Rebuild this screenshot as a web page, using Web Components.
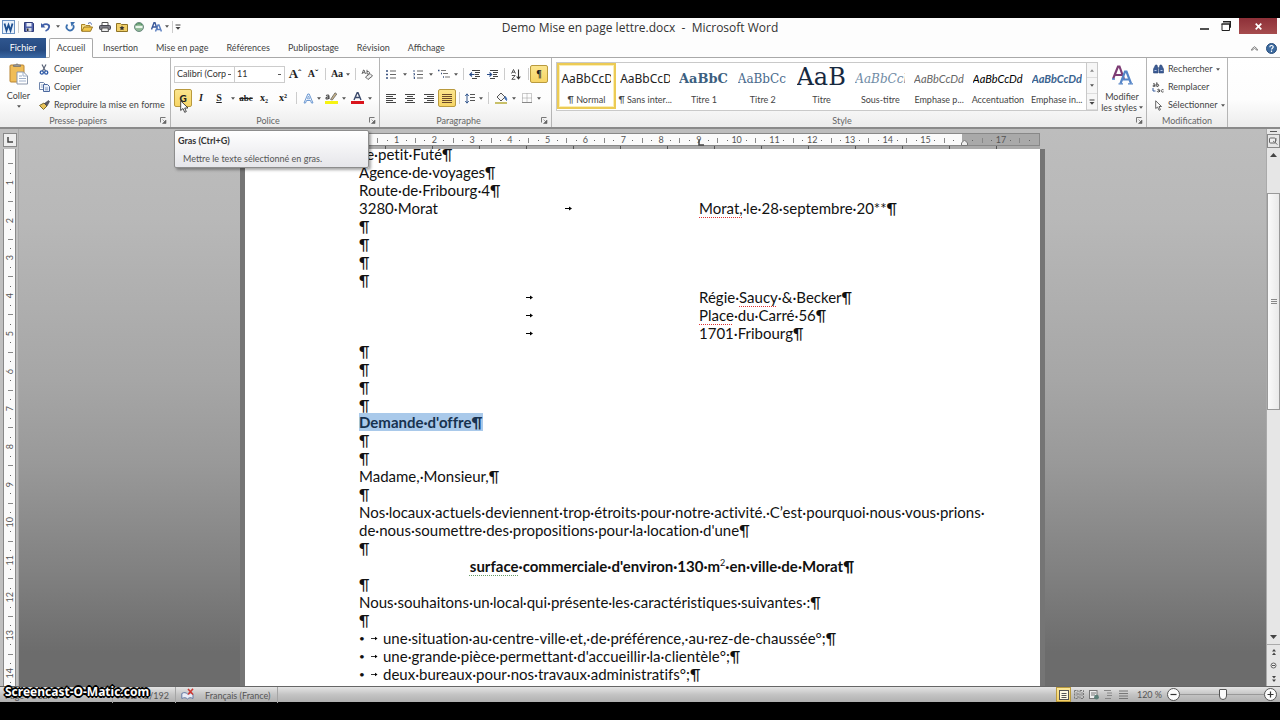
<!DOCTYPE html>
<html lang="fr">
<head>
<meta charset="utf-8">
<title>Demo Mise en page lettre.docx - Microsoft Word</title>
<style>
html, body { margin: 0; height: 100%; background: #000; }
body { font: 9px/12px Lato, "Noto Sans", sans-serif; color: #444; }
</style>
</head>
<body>
<word-window></word-window>

<script>
const ICONS = {
  word: [13, 14, '<rect x=".5" y=".5" width="12" height="13" fill="#e9f1fb" stroke="#6c93c4"/><path d="M2.5 3.5 4.5 10.5 6.5 5 8.5 10.5 10.5 3.5" fill="none" stroke="#1d4f91" stroke-width="1.8"/>'],
  save: [10, 10, '<path d="M.5.5h8l1 1v8h-9z" fill="#4d5fa8" stroke="#2e3a78"/><rect x="2.5" y="1" width="5" height="3.5" fill="#e8ecf8"/><rect x="2.5" y="6" width="5" height="3.5" fill="#cfd3dd"/><rect x="3" y="6.5" width="1.5" height="2.5" fill="#333"/>'],
  undo: [10, 10, '<path d="M1.500 3.500C5 1 9 2.500 8 5.500 7.500 7.500 6 8.500 4.500 9" fill="none" stroke="#3f5ea8" stroke-width="1.800"/><path d="M0 1v4.500h4.500z" fill="#3f5ea8"/>'],
  redo: [10, 10, '<path d="M2.500 2.500A3.500 3.500 0 1 0 8 3" fill="none" stroke="#3a6fae" stroke-width="1.800"/><path d="M5.500 0H10L6.500 4.500z" fill="#3a6fae"/>'],
  open: [12, 10, '<path d="M.5 9V2.500h3.500l1 1h4V5" fill="#f6dd86" stroke="#a98428"/><path d="M.8 9.300 3 5h8.500L9.500 9.300z" fill="#f3c84a" stroke="#9a7722"/><path d="M7 1.500c2-1.500 3.500-.5 3.500 1" fill="none" stroke="#3f5ea8"/>'],
  print: [12, 10, '<path d="M3 3.500V.5h6v3" fill="#fff" stroke="#555"/><rect x=".5" y="3.500" width="11" height="4" rx="1" fill="#7b7b85" stroke="#44444c"/><path d="M3 6h6l.5 3.500h-7z" fill="#eee" stroke="#555"/>'],
  folder: [12, 10, '<path d="M.5 9.500V1.500h4l1 1h6v7z" fill="#f1cf68" stroke="#8f7324"/><path d="M6 3.500l.8 1.600 1.700.2-1.200 1.200.3 1.700L6 7.400l-1.600.8.3-1.700-1.200-1.200 1.700-.2z" fill="#333"/>'],
  sync: [10, 10, '<circle cx="5" cy="5" r="4.500" fill="#8fb896" stroke="#6c8a80"/><path d="M1.500 5h7" stroke="#e9f5ea" stroke-width="2.200"/><path d="M2 3a4 4 0 0 1 6 0" fill="none" stroke="#4c8f5b"/>'],
  letters: [11, 10, '<path d="M.5 7.500 3 .8h1l2.300 6.700M1.500 5h4" fill="none" stroke="#3a5899" stroke-width="1.400"/><path d="M4.500 9.500 7 3h1l2.400 6.500M5.500 7.500h4" fill="none" stroke="#5b7fc0" stroke-width="1.400"/>'],
  more: [6, 6, '<path d="M.5 1h5" stroke="#444"/><path d="M.5 3h5L3 5.700z" fill="#444"/>'],
  paste: [20, 22, '<rect x="1" y="2" width="14" height="17" rx="1" fill="#f0bd58" stroke="#b98430"/><path d="M4.500 3.500V2h2a1.600 1.600 0 0 1 3 0h2v1.500z" fill="#9a9a9a" stroke="#6d6d6d" stroke-width=".7"/><path d="M8 9h6.500l4 4v8H8z" fill="#fff" stroke="#8b97ab"/><path d="M14 9v4h4M10 13h3M10 15.500h7M10 18h7" fill="none" stroke="#9fb0cb"/>'],
  cut: [10, 11, '<path d="M3 .5 6.500 7M7 .5 3.500 7" stroke="#5a6478" stroke-width="1.200"/><circle cx="2.800" cy="8.500" r="1.600" fill="none" stroke="#2c58a6" stroke-width="1.300"/><circle cx="7.200" cy="8.500" r="1.600" fill="none" stroke="#2c58a6" stroke-width="1.300"/>'],
  copy: [11, 10, '<path d="M.5.5h4l2 2v5h-6z" fill="#fff" stroke="#7086ad"/><path d="M4.500 2.500h4l2 2v5h-6z" fill="#e8effa" stroke="#4b689e"/><path d="M6 6h3M6 7.800h3M1.800 3h2M1.800 5h2" stroke="#6d88b8" stroke-width=".8"/>'],
  brush: [11, 10, '<path d="M.5 5.500 5 3l3 3-3.500 3.500z" fill="#e8c35a" stroke="#7d6a2e"/><path d="M5.500 3.500 9.500.5l1 1L8 6z" fill="#5a5a66" stroke="#3c3c46" stroke-width=".6"/>'],
  eraser: [12, 11, '<path d="M1 5 2.500 1h.5L4.500 5M1.700 3.700h2M6 .8V5h1.500a1.300 1.300 0 0 0 0-2.500H6" fill="none" stroke="#555" stroke-width=".9"/><path d="M4.500 8 9 4.500 11.500 7 7 10.500z" fill="#eee" stroke="#555" stroke-width=".9"/>'],
  effect: [11, 11, '<path d="M1 10 4.800 1h1.400L10 10H8.500L7.500 7.500H3.500L2.500 10z" fill="#f3f8ff" stroke="#6f9ad2"/><path d="M4.300 5.800h2.400L5.500 3z" fill="#fff" stroke="#6f9ad2" stroke-width=".8"/>'],
  marker: [13, 12, '<rect y="9" width="13" height="3" fill="#f6f312"/><path d="M1 3.500c2-1 3-.5 3 1V7M4 5C2 4.500.8 5.500 1 6.500 1.500 7.500 3 7 4 6" fill="none" stroke="#444" stroke-width="1.100"/><path d="M5.500 7.500 10 .8l1.800 1.200-4.500 6z" fill="#c9b58a" stroke="#555" stroke-width=".7"/>'],
  color: [13, 12, '<rect y="9" width="13" height="3" fill="#d9141c"/><path d="M3 8 6.200.8h.8L10 8M4 5.500h5" fill="none" stroke="#3b4a6b" stroke-width="1.400"/>'],
  bullets: [10, 9, '<path d="M4 1h6M4 4.500h6M4 8h6" stroke="#666"/><path d="M0 1h2M0 4.500h2M0 8h2" stroke="#39517f" stroke-width="1.500"/>'],
  numbers: [10, 9, '<path d="M4 1h6M4 4.500h6M4 8h6" stroke="#666"/><path d="M1 0v2M.5 3.500h1v1.500h-1M.5 7h1v2h-1" fill="none" stroke="#39517f" stroke-width=".9"/>'],
  levels: [12, 10, '<path d="M3 1.500h5M5 4.500h5M7 8h5" stroke="#777"/><path d="M0 1.500h1.500M3 4.500h1M5 8h1" stroke="#39517f" stroke-width="1.500"/>'],
  outdent: [11, 9, '<path d="M3 .5h8M6 2.500h5M6 4.500h4M6 6.500h5M3 8.500h5" stroke="#444"/><path d="M5.500 4.500H1M3 2.500l-2.200 2L3 6.500" fill="none" stroke="#2a4d8a" stroke-width="1.100"/>'],
  indent: [11, 9, '<path d="M3 .5h8M6 2.500h5M6 4.500h4M6 6.500h5M3 8.500h5" stroke="#444"/><path d="M0 4.500h4.500M2.500 2.500l2.200 2-2.200 2" fill="none" stroke="#2a4d8a" stroke-width="1.100"/>'],
  sort: [10, 11, '<path d="M.5 4.500 2.500.5l2 4M1.200 3.200h2.600M.8 6.500h3.400L.8 10.300h3.600" fill="none" stroke="#444" stroke-width=".9"/><path d="M7.500.5v9M5.700 7.500l1.800 2.300 1.800-2.300" fill="none" stroke="#333" stroke-width="1.100"/>'],
  left: [10, 9, '<path d="M0 .5h10M0 2.500h7M0 4.500h10M0 6.500h7M0 8.500h10" stroke="#444"/>'],
  center: [10, 9, '<path d="M0 .5h10M2 2.500h6M0 4.500h10M2 6.500h6M0 8.500h10" stroke="#444"/>'],
  right: [10, 9, '<path d="M0 .5h10M3 2.500h7M0 4.500h10M3 6.500h7M0 8.500h10" stroke="#444"/>'],
  justify: [10, 9, '<path d="M0 .5h10M0 2.500h10M0 4.500h10M0 6.500h10M0 8.500h10" stroke="#6b4a2a"/>'],
  spacing: [10, 11, '<path d="M5 1.500h5M5 4.500h5M5 7.500h5" stroke="#555"/><path d="M2 1v9M.3 3 2 .8 3.700 3M.3 8 2 10.200 3.700 8" fill="none" stroke="#35598f"/>'],
  shading: [13, 12, '<rect y="10" width="12" height="2" fill="#c8c06a"/><path d="M2 5 6 1l4 4-4 4z" fill="#f5f5f5" stroke="#555"/><path d="M10 4.500c1.500 1 2 2.500 1.500 4l-1.500-2z" fill="#3f6db0" stroke="#3f6db0"/>'],
  borders: [10, 10, '<path d="M.5.5h9v9h-9zM5 .5v9M.5 5h9" fill="none" stroke="#999" stroke-dasharray="1 1"/><path d="M0 9.500h10" stroke="#888"/>'],
  styles: [21, 20, '<path d="M1 14 6 1.500h1.500L12 14M3 10h8" fill="none" stroke="#7d3c74" stroke-width="2.200"/><path d="M8.500 18.500 13 6.500h1.500L19 18.500M10 14.500h7" fill="none" stroke="#5585c8" stroke-width="2.200"/><path d="M6.500 18.800h4.500M16 18.800h5M0 14h3" stroke="#5585c8" stroke-width="1.300"/>'],
  find: [11, 10, '<path d="M.5 9V5L2.500 1H4l1 4v4zM6 9V5l1-4h1.500l2 4v4z" fill="#3c5c96" stroke="#2b4675" stroke-width=".6"/><path d="M4.500 4h2" stroke="#2b4675"/><path d="M1.500 6.500h2M7.500 6.500h2" stroke="#b9cbe8"/>'],
  replace: [12, 11, '<path d="M1 2c1.500-.6 2-.2 2 1v1.500M3 3.300C1.500 3 .8 3.600 1 4.200s1.300.4 2-.3M4.800.3v4.200h1a1.200 1.200 0 0 0 0-2.300h-1M5.500 7.500c1.500-.6 2-.2 2 1V10M7.500 8.800c-1.500-.3-2.200.3-2 .9s1.300.4 2-.3M11.500 7.800c-1.500-.6-2.300.2-2.300 1s.8 1.700 2.300 1" fill="none" stroke="#444"/><path d="M1 6v3h2.500" fill="none" stroke="#345a9c"/>'],
  select: [7, 11, '<path d="M.7.8v7.700L2.600 7l1.500 3.300 1.300-.6L4 6.500h2.500z" fill="#fff" stroke="#555" stroke-width=".9"/>'],
  launch: [7, 7, '<path d="M.5 5.500v-5h5" fill="none" stroke="#777"/><path d="M2.500 2.500 5.500 5.500M6 3v3.500H2.500z" fill="#666" stroke="#666" stroke-width=".6"/>'],
  down: [4, 3, '<path d="M0 .3h4L2 2.800z" fill="#555"/>'],
  up: [4, 3, '<path d="M0 2.800h4L2 .3z" fill="#888"/>'],
  minimize: [9, 8, '<path d="M0 7h9" stroke="#222" stroke-width="1.600"/>'],
  restore: [10, 10, '<path d="M1 3v6.500h7.500V3" fill="#fff" stroke="#222"/><path d="M.5 3H9M2 .8h7.500v6" fill="none" stroke="#222" stroke-width="1.600"/>'],
  close: [7, 7, '<path d="M.7.7l5.600 5.600M6.300.7.700 6.300" stroke="#fff" stroke-width="1.700"/>'],
  collapse: [7, 5, '<path d="M.7 3 3.500.6 6.300 3v1.400L3.500 2.400.7 4.400z" fill="none" stroke="#666" stroke-width=".8"/>'],
  help: [11, 11, '<circle cx="5.500" cy="5.500" r="5" fill="#3c6a9f" stroke="#294e7c"/><path d="M3.800 4.200c0-2.200 3.400-2.200 3.400-.2 0 1.200-1.700 1.200-1.700 2.600M5.500 7.600v1.300" fill="none" stroke="#fff" stroke-width="1.200"/>'],
  proof: [14, 13, '<path d="M.8 5.500C3 4 5 4.500 6.500 6 8 4.500 10 4.500 12 6v4.500c-2-1.200-4-1-5.500.5C5 9.500 3 9.300.8 10.500z" fill="#e9edf6" stroke="#6478a3"/><path d="M7 1l5 5.500M12 .8 7.200 6.500" stroke="#cf3a34" stroke-width="1.600"/>'],
  viewPrint: [10, 10, '<rect x=".5" y=".5" width="9" height="9" fill="#fffbe6" stroke="#555"/><path d="M2.500 3.500h5M2.500 5.500h5M2.500 7.500h5" stroke="#555"/>'],
  viewRead: [10, 9, '<path d="M.5.5h3.500v8H.5zM6 .5h3.500v8H6z" fill="none" stroke="#777" stroke-dasharray="2 1"/><path d="M1.500 3h2M1.500 5h2M7 3h2M7 5h2" stroke="#888"/>'],
  viewWeb: [10, 10, '<rect x=".5" y=".5" width="7.500" height="8" fill="#eee" stroke="#777"/><path d="M2 3h5M2 5h4" stroke="#777"/><circle cx="7.500" cy="7.200" r="2.400" fill="#5c7f78"/>'],
  viewPlan: [9, 9, '<path d="M0 .5h7M3 3h5M3 5.500h5M1 8.500h6" stroke="#888"/>'],
  viewDraft: [9, 9, '<path d="M0 1h9M0 3.500h9M0 6h9M0 8.500h9" stroke="#777"/>'],
  viewRuler: [9, 8, '<rect x=".5" y="1" width="6" height="5" rx="1" fill="#eee" stroke="#666"/><path d="M4 4l4.500 3.500M7 1v3" stroke="#777"/>'],
  arrowUp: [7, 4, '<path d="M0 4h7L3.500 0z" fill="#444"/>'],
  arrowDown: [7, 4, '<path d="M0 0h7L3.500 4z" fill="#444"/>'],
  twoUp: [4, 6, '<path d="M0 2.500h4L2 0zM0 6h4L2 3.500z" fill="#444"/>'],
  twoDown: [4, 6, '<path d="M0 0h4L2 2.500zM0 3.500h4L2 6z" fill="#444"/>'],
  target: [7, 7, '<circle cx="3.500" cy="3.500" r="2.500" fill="#eee" stroke="#666"/><path d="M2 3.500h3" stroke="#555"/>'],
  minus: [13, 13, '<circle cx="6.500" cy="6.500" r="6" fill="#fcfcfc" stroke="#555"/><path d="M3.500 6.500h6" stroke="#333" stroke-width="1.200"/>'],
  plus: [13, 13, '<circle cx="6.500" cy="6.500" r="6" fill="#fcfcfc" stroke="#555"/><path d="M3.500 6.500h6M6.500 3.500v6" stroke="#333" stroke-width="1.200"/>'],
  pointer: [9, 13, '<path d="M.7.8v9.700L3 8.500l1.700 3.800 1.600-.7L4.700 8H8z" fill="#fff" stroke="#333" stroke-width=".9"/>'],
  tab: [7, 5, '<path d="M0 2.500h5" stroke="#000"/><path d="M4 .5 7 2.500l-3 2z" fill="#000"/>'],
  tabSmall: [7, 5, '<path d="M0 2.500h5" stroke="#000" stroke-width=".8"/><path d="M4 .8 6.500 2.500 4 4.200z" fill="#000"/>'],
  corner: [6, 6, '<path d="M1 0v5h5" fill="none" stroke="#444" stroke-width="1.500"/>'],
  indentMark: [7, 7, '<path d="M.5 6.500V4l3-3 3 3v2.500z" fill="#eee" stroke="#777"/>']
};
const icon = name => {
  const [w, h, body] = ICONS[name];
  return `<svg width="${w}" height="${h}" viewBox="0 0 ${w} ${h}" aria-hidden="true">${body}</svg>`;
};
const BASE = `
  :host, *, *::before { box-sizing: border-box; }
  button { font: inherit; color: inherit; background: none; border: 0; padding: 0; margin: 0;
    display: flex; align-items: center; justify-content: center; flex: none; white-space: nowrap; }
  svg { display: block; flex: none; }
`;
const define = (name, css, html) => customElements.define(name, class extends HTMLElement {
  constructor() {
    super();
    this.attachShadow({ mode: 'open' });
  }
  connectedCallback() {
    const template = document.createElement('template');
    template.innerHTML = `<style>${BASE}${css}</style>${typeof html === 'function' ? html(this) : html}`;
    this.shadowRoot.replaceChildren(template.content.cloneNode(true));
  }
});

/* Small square command; "size" picks its width, "on" lights it. */
define('tool-button', `
  :host { display: block; flex: none; width: 18px; height: 18px; }
  :host([size="xs"]) { width: 6px; }
  :host([size="s"]) { width: 8px; }
  :host([size="m"]) { width: 10px; }
  :host([size="l"]) { width: 16px; }
  :host([size="xl"]) { width: 20px; }
  button { width: 100%; height: 100%; font: 700 10px/12px "Liberation Serif", serif; color: #222; }
  :host([on]) button { background: linear-gradient(#fbe58e, #f7d565); border: 1px solid #b99a3e; border-radius: 2px; }
`, el => `<button type="button" aria-label="${el.getAttribute('label')}">${el.hasAttribute('icon') ? icon(el.getAttribute('icon')) : '<slot></slot>'}</button>`);

define('tool-gap', `
  :host { display: flex; flex: none; width: 8px; height: 12px; justify-content: center; }
  :host([size="xs"]) { width: 4px; }
  :host([size="s"]) { width: 6px; }
  i { width: 1px; background: #ccc; }
`, '<i></i>');

/* Ribbon section: commands above, caption and launcher below. */
define('ribbon-group', `
  :host { display: flex; flex-direction: column; flex: none; border-right: 1px solid #b5b5b5; }
  .body { flex: 1; display: flex; min-width: 0; }
  footer { display: flex; align-items: center; height: 13px; color: #666; }
  footer span { flex: 1; text-align: center; }
  footer button { width: 14px; height: 13px; }
`, el => `<div class="body"><slot></slot></div><footer><span>${el.getAttribute('caption')}</span>${el.hasAttribute('plain') ? '' : `<button type="button" aria-label="Options ${el.getAttribute('caption')}">${icon('launch')}</button>`}</footer>`);

/* Icon with a text beside it and, when asked, a drop arrow. */
define('text-command', `
  :host { display: block; }
  button { height: 18px; gap: 3px; justify-content: flex-start; }
  .pic { width: 14px; display: flex; justify-content: center; }
`, el => `<button type="button"><span class="pic">${icon(el.getAttribute('icon'))}</span><slot></slot>${el.hasAttribute('drop') ? icon('down') : ''}</button>`);

define('style-card', `
  :host { display: block; flex: 1; min-width: 0; }
  button { width: 100%; height: 46px; flex-direction: column; justify-content: flex-start; padding: 0 3px; border: 2px solid transparent; }
  :host([on]) button { border-color: #eccb55; box-shadow: inset 0 0 0 1px #fbeeb5; }
  .sample { width: 50px; height: 28px; line-height: 28px; overflow: hidden; text-align: left; }
  .name { line-height: 14px; }
`, '<button type="button"><span class="sample"><slot name="sample"></slot></span><span class="name"><slot></slot></span></button>');

define('title-bar', `
  :host { display: grid; grid-template-columns: 1fr auto 1fr; height: 20px; background: #fdfdfd; }
  .quick { display: flex; align-items: center; height: 17px; }
  h1 { margin: 0; font: 400 12px/20px "Open Sans", "Noto Sans", sans-serif; color: #333; white-space: pre; }
  .window { display: flex; justify-content: flex-end; padding-right: 3px; }
  .window button { width: 22px; height: 16px; }
  .window .close { width: 38px; margin-left: 2px; background: linear-gradient(#8e3038, #a64c4e); }
`, `<div class="quick">
  <tool-button size="l" icon="word" label="Word"></tool-button><tool-gap size="xs"></tool-gap>
  <tool-button icon="save" label="Enregistrer"></tool-button><tool-button size="l" icon="undo" label="Annuler"></tool-button>
  <tool-button size="s" icon="down" label="Liste Annuler"></tool-button><tool-button size="l" icon="redo" label="Rétablir"></tool-button>
  <tool-button icon="open" label="Ouvrir"></tool-button><tool-button icon="print" label="Imprimer"></tool-button>
  <tool-button size="l" icon="folder" label="Favoris"></tool-button><tool-button icon="sync" label="Synchroniser"></tool-button>
  <tool-button size="l" icon="letters" label="Styles"></tool-button><tool-button size="xs" icon="down" label="Liste Styles"></tool-button>
  <tool-gap size="xs"></tool-gap><tool-button size="s" icon="more" label="Personnaliser"></tool-button>
</div>
<h1>Demo Mise en page lettre.docx  -  Microsoft Word</h1>
<div class="window"><button type="button" aria-label="Réduire">${icon('minimize')}</button><button type="button" aria-label="Restaurer">${icon('restore')}</button><button type="button" class="close" aria-label="Fermer">${icon('close')}</button></div>`);

define('ribbon-tabs', `
  :host { display: flex; height: 20px; background: #fdfdfd; border-bottom: 1px solid #a9a9a9; }
  button { height: 20px; padding: 0 9px; }
  .file { width: 46px; background: linear-gradient(#2f568f, #264a80 60%, #3a68a4); color: #fff; margin-right: 3px; }
  .on { width: 44px; background: #fff; border: 1px solid #a9a9a9; border-bottom-color: #fff; border-radius: 2px 2px 0 0; margin-right: 1px; }
  .tools { margin-left: auto; display: flex; }
  .tools button { padding: 0; width: 17px; }
`, `<button type="button" class="file">Fichier</button><button type="button" class="on">Accueil</button>
${['Insertion', 'Mise en page', 'Références', 'Publipostage', 'Révision', 'Affichage'].map(t => `<button type="button">${t}</button>`).join('')}
<div class="tools"><button type="button" aria-label="Réduire le ruban">${icon('collapse')}</button><button type="button" aria-label="Aide">${icon('help')}</button></div>`);

define('home-ribbon', `
  :host { display: flex; height: 71px; background: linear-gradient(#fff, #fdfdfd 60%, #ececec); border-bottom: 2px solid #8a8a8a; padding-right: 52px; }
  .clip { width: 171px; }
  .font { width: 209px; }
  .para { width: 172px; }
  .style { flex: 1; min-width: 0; }
  .edit { width: 81px; }
  .paste { width: 37px; flex-direction: column; justify-content: flex-start; padding-top: 5px; }
  .paste span { line-height: 14px; padding-top: 4px; }
  .paste svg:last-child { margin-top: 2px; }
  .stack { padding-top: 2px; }
  .edit .stack { padding-left: 4px; }
  .rows { display: grid; align-content: start; gap: 6px; padding: 7px 0 0 3px; }
  .para .rows { padding-left: 2px; }
  .rows > div { display: flex; align-items: center; height: 18px; }
  select { appearance: none; font: inherit; line-height: 14px; color: #333; height: 17px; padding: 0 8px 0 2px; margin: 0; border: 1px solid #ccc; border-radius: 0;
    background: #fff linear-gradient(#555, #555) no-repeat right 3px center / 3px 1px; }
  .face { width: 61px; }
  .size { width: 51px; margin-left: -1px; }
  .gallery { flex: 1; min-width: 0; display: flex; align-items: flex-start; height: 49px; margin: 4px 0 0 4px; border: 1px solid #c9c9c9; background: #fff; }
  .scroll { display: grid; grid-template-rows: 15px 16px 16px; width: 11px; border-left: 1px solid #c9c9c9; }
  .scroll button { border-bottom: 1px solid #ddd; background: #f6f6f6; }
  .change { width: 48px; flex-direction: column; justify-content: flex-start; padding-top: 7px; line-height: 11px; }
  .change .l { padding-top: 6px; }
  .change .m { display: flex; align-items: center; gap: 2px; }
  [slot] { white-space: nowrap; }
  .b { font: 12px/28px "Noto Sans", sans-serif; color: #222; }
  .t1 { font: 700 13px/28px "DejaVu Serif", serif; color: #3c5f80; }
  .t2 { font: 12px/28px "DejaVu Serif", serif; color: #48698c; }
  .t { font: 24px/24px "DejaVu Serif", serif; color: #17293f; }
  .st { font: italic 12px/28px "DejaVu Serif", serif; color: #6f8ba5; }
  .e { font: italic 11px/28px Lato, sans-serif; color: #666; }
  .a { font: italic 11px/28px Lato, sans-serif; color: #000; }
  .i { font: italic 700 11px/28px Lato, sans-serif; color: #3a6390; }
  .k { font-family: Lato, sans-serif; font-weight: 900; }
`, `<ribbon-group class="clip" caption="Presse-papiers">
  <button type="button" class="paste">${icon('paste')}<span>Coller</span>${icon('down')}</button>
  <div class="stack"><text-command icon="cut">Couper</text-command><text-command icon="copy">Copier</text-command><text-command icon="brush">Reproduire la mise en forme</text-command></div>
</ribbon-group>
<ribbon-group class="font" caption="Police"><div class="rows">
  <div><select class="face" aria-label="Police"><option>Calibri (Corp</option></select><select class="size" aria-label="Taille"><option>11</option></select>
    <tool-button size="xl" label="Agrandir"><span style="font-size:13px">A</span>ˆ</tool-button><tool-button size="l" label="Réduire">Aˇ</tool-button><tool-gap></tool-gap>
    <tool-button size="l" label="Casse">Aa</tool-button><tool-button size="xs" icon="down" label="Liste Casse"></tool-button><tool-gap></tool-gap><tool-button size="l" icon="eraser" label="Effacer"></tool-button></div>
  <div><tool-button on label="Gras"><span class="k">G</span></tool-button><tool-button label="Italique"><i>I</i></tool-button><tool-button label="Souligné"><u>S</u></tool-button><tool-button size="m" icon="down" label="Liste Souligné"></tool-button>
    <tool-button size="l" label="Barré"><s style="font-size:9px">abc</s></tool-button><tool-button size="xl" label="Indice">x₂</tool-button><tool-button label="Exposant">x²</tool-button><tool-gap></tool-gap>
    <tool-button size="l" icon="effect" label="Effets"></tool-button><tool-button size="xs" icon="down" label="Liste Effets"></tool-button><tool-button icon="marker" label="Surlignage"></tool-button><tool-button size="s" icon="down" label="Liste Surlignage"></tool-button>
    <tool-button icon="color" label="Couleur"></tool-button><tool-button size="s" icon="down" label="Liste Couleur"></tool-button></div>
</div></ribbon-group>
<ribbon-group class="para" caption="Paragraphe"><div class="rows">
  <div><tool-button icon="bullets" label="Puces"></tool-button><tool-button size="m" icon="down" label="Liste Puces"></tool-button><tool-button size="l" icon="numbers" label="Numéros"></tool-button><tool-button size="m" icon="down" label="Liste Numéros"></tool-button>
    <tool-button size="l" icon="levels" label="Niveaux"></tool-button><tool-button size="s" icon="down" label="Liste Niveaux"></tool-button><tool-gap size="s"></tool-gap><tool-button size="l" icon="outdent" label="Diminuer le retrait"></tool-button><tool-button size="xl" icon="indent" label="Augmenter le retrait"></tool-button><tool-gap size="xs"></tool-gap>
    <tool-button size="xl" icon="sort" label="Trier"></tool-button><tool-gap size="xs"></tool-gap><tool-button on label="Afficher tout">¶</tool-button></div>
  <div><tool-button icon="left" label="Gauche"></tool-button><tool-button size="xl" icon="center" label="Centrer"></tool-button><tool-button icon="right" label="Droite"></tool-button><tool-button on icon="justify" label="Justifier"></tool-button><tool-gap size="s"></tool-gap>
    <tool-button size="l" icon="spacing" label="Interligne"></tool-button><tool-button size="xs" icon="down" label="Liste Interligne"></tool-button><tool-gap></tool-gap><tool-button icon="shading" label="Trame"></tool-button><tool-button size="s" icon="down" label="Liste Trame"></tool-button>
    <tool-button icon="borders" label="Bordures"></tool-button><tool-button size="xs" icon="down" label="Liste Bordures"></tool-button></div>
</div></ribbon-group>
<ribbon-group class="style" caption="Style">
  <div class="gallery">${[['b', 'AaBbCcD', '¶ Normal'], ['b', 'AaBbCcD', '¶ Sans inter...'], ['t1', 'AaBbC', 'Titre 1'], ['t2', 'AaBbCc', 'Titre 2'], ['t', 'AaB', 'Titre'], ['st', 'AaBbCcl', 'Sous-titre'], ['e', 'AaBbCcDd', 'Emphase p...'], ['a', 'AaBbCcDd', 'Accentuation'], ['i', 'AaBbCcDd', 'Emphase in...']]
    .map(([c, s, n], k) => `<style-card${k ? '' : ' on'}><span slot="sample" class="${c}">${s}</span>${n}</style-card>`).join('')}
    <div class="scroll"><button type="button" aria-label="Styles précédents">${icon('up')}</button><button type="button" aria-label="Styles suivants">${icon('down')}</button><button type="button" aria-label="Tous les styles">${icon('more')}</button></div></div>
  <button type="button" class="change">${icon('styles')}<span class="l">Modifier</span><span class="m">les styles ${icon('down')}</span></button>
</ribbon-group>
<ribbon-group class="edit" caption="Modification" plain><div class="stack"><text-command icon="find" drop>Rechercher</text-command><text-command icon="replace">Remplacer</text-command><text-command icon="select" drop>Sélectionner</text-command></div></ribbon-group>`);

/* Centimetre ruler, horizontal or vertical. */
define('ruler-scale', `
  :host { display: flex; overflow: hidden; color: #555; }
  .cell { display: grid; align-items: center; justify-items: center; }
  :host(:not([vertical])) .run { display: grid; grid-template-columns: repeat(18, minmax(0, 1fr)); flex: none; width: 680px; }
  :host(:not([vertical])) .cell { grid-template-columns: repeat(4, minmax(0, 1fr)); }
  :host(:not([vertical])) i { width: 1px; height: 5px; background: #888; }
  :host([vertical]) .run { display: grid; grid-template-rows: repeat(15, minmax(0, 1fr)); height: 566px; flex: none; width: 100%; }
  :host([vertical]) .cell { grid-template-rows: repeat(4, minmax(0, 1fr)); }
  :host([vertical]) i { width: 5px; height: 1px; background: #888; }
  :host([vertical]) span { writing-mode: vertical-rl; transform: rotate(180deg); }
  span { display: grid; place-items: center; }
  b { width: 1px; height: 1px; background: #666; }
`, el => {
  const vertical = el.hasAttribute('vertical');
  const shown = k => vertical ? k < 15 : k < 18 && k !== 16;
  return `<div class="run">${Array.from({ length: vertical ? 15 : 18 }, (_, k) => `<div class="cell"><i></i><b></b><span>${shown(k + 1) ? k + 1 : ''}</span><b></b></div>`).join('')}</div>`;
});

define('letter-line', `
  :host { display: flex; height: 18px; align-items: center; white-space: nowrap; }
  :host([centered]) { justify-content: center; }
  .lead { flex: none; width: 340px; display: flex; align-items: center; }
  .lead svg { margin: 0 auto; }
  .item { flex: none; width: 24px; display: flex; align-items: center; gap: 6px; font-size: 10px; }
`, el => el.hasAttribute('tabbed') ? `<span class="lead"><slot name="before"></slot>${icon('tab')}</span><span><slot></slot></span>`
  : el.hasAttribute('bullet') ? `<span class="item">•${icon('tabSmall')}</span><span><slot></slot></span>` : '<span><slot></slot></span>');

define('letter-page', `
  :host { display: block; width: 795px; margin: 0 auto; background: #fff; box-shadow: -5px 0 0 #757575, 5px 0 0 #757575; overflow: hidden; color: #111;
    font: 15px/18px Lato, "Noto Sans", sans-serif; font-variant-ligatures: none; }
  article { width: 606px; margin: -4px 0 0 114px; }
  .gap { height: 71px; }
  u { text-decoration: underline dotted #d33 1px; text-underline-offset: 3px; text-decoration-skip-ink: none; }
  .g { text-decoration-color: #696; }
  mark { display: inline-block; height: 18px; background: #a9c9ea; color: #17324f; font-weight: 700; }
  strong sup { font-size: 9px; line-height: 0; font-weight: 400; }
`, () => {
  const blank = '<letter-line>¶</letter-line>';
  const gap = `<div class="gap">${blank.repeat(4)}</div>`;
  return `<article>
  <letter-line>Le·petit·Futé¶</letter-line><letter-line>Agence·de·voyages¶</letter-line><letter-line>Route·de·Fribourg·4¶</letter-line>
  <letter-line tabbed><span slot="before">3280·Morat</span><u>Morat,</u>·le·28·septembre·20**¶</letter-line>
  ${gap}
  <letter-line tabbed>Régie·<u>Saucy</u>·&amp;·Becker¶</letter-line><letter-line tabbed><u>Place</u>·du·Carré·56¶</letter-line><letter-line tabbed>1701·Fribourg¶</letter-line>
  ${gap}
  <letter-line><mark>Demande·d'offre¶</mark></letter-line>${blank}${blank}
  <letter-line>Madame,·Monsieur,¶</letter-line>${blank}
  <letter-line>Nos·locaux·actuels·deviennent·trop·étroits·pour·notre·activité.·C’est·pourquoi·nous·vous·prions·</letter-line>
  <letter-line>de·nous·soumettre·des·propositions·pour·la·location·d'une¶</letter-line>${blank}
  <letter-line centered><strong><u class="g">surface</u>·commerciale·d'environ·130·m<sup>2</sup>·en·ville·de·Morat¶</strong></letter-line>${blank}
  <letter-line>Nous·souhaitons·un·local·qui·présente·les·caractéristiques·suivantes·:¶</letter-line>${blank}
  <letter-line bullet>une·situation·au·centre-ville·et,·de·préférence,·au·rez-de-chaussée°;¶</letter-line>
  <letter-line bullet>une·grande·pièce·permettant·d'accueillir·la·clientèle°;¶</letter-line>
  <letter-line bullet>deux·bureaux·pour·nos·travaux·administratifs°;¶</letter-line>
</article>`;
});

define('scroll-rail', `
  :host { display: flex; flex-direction: column; align-items: center; width: 14px; background: #e6e6e6; border-left: 1px solid #aaa; padding-top: 2px; }
  button { width: 13px; height: 14px; }
  .split { height: 3px; border-top: 1px solid #555; width: 7px; }
  .rule { border: 1px solid #888; }
  .track { flex: 1; width: 100%; padding-top: 31px; }
  .thumb { height: 217px; display: grid; place-content: center; gap: 1px; border: 1px solid #999; background: linear-gradient(90deg, #fafafa, #e9e9e9); }
  .thumb i { width: 6px; height: 1px; background: #888; }
  .foot { border-top: 1px solid #aaa; }
`, `<div class="split"></div><button type="button" class="rule" aria-label="Règle">${icon('viewRuler')}</button><button type="button" aria-label="Haut">${icon('arrowUp')}</button>
<div class="track"><div class="thumb"><i></i><i></i><i></i></div></div>
<button type="button" aria-label="Bas">${icon('arrowDown')}</button><button type="button" class="foot" aria-label="Page précédente">${icon('twoUp')}</button><button type="button" aria-label="Objet">${icon('target')}</button><button type="button" aria-label="Page suivante">${icon('twoDown')}</button>`);

define('work-area', `
  :host { display: flex; min-height: 0; overflow: hidden; background: linear-gradient(#bdbdbd, #b8b8b8 16%, #a6a6a6 45%, #999 60%, #808080 80%, #6c6c6c 94%); }
  .side { display: flex; flex-direction: column; width: 19px; background: #bfbfbf; padding-left: 3px; border-right: 1px solid #aaa; }
  .side button { width: 14px; height: 14px; margin: 4px 0 2px; background: #eee; border: 1px solid #888; }
  .side ruler-scale { flex: 1; flex-direction: column; width: 13px; background: #fafafa; border: solid #888; border-width: 0 1px; padding-top: 10px; }
  .main { flex: 1; min-width: 0; display: flex; flex-direction: column; }
  .ruler { position: relative; width: 795px; margin: 4px auto 0; }
  .across { height: 13px; background: linear-gradient(90deg, #b5b5b5 114px, #fafafa 114px 717px, #a9a9a9 717px); border: 1px solid #888; border-left: 0; padding-left: 128px; }
  .stops { height: 3px; background: repeating-linear-gradient(90deg, transparent 0 46px, #555 46px 47px), #ababab; }
  .stop, .margin { position: absolute; bottom: 3px; }
  .stop { left: 453px; }
  .margin { left: 716px; }
  letter-page { flex: 1; min-height: 0; }
`, `<div class="side"><button type="button" aria-label="Tabulation">${icon('corner')}</button><ruler-scale vertical></ruler-scale></div>
<div class="main"><div class="ruler"><ruler-scale class="across"></ruler-scale><div class="stops"></div><div class="stop">${icon('corner')}</div><div class="margin">${icon('indentMark')}</div></div><letter-page></letter-page></div>
<scroll-rail></scroll-rail>`);

define('status-bar', `
  :host { display: flex; align-items: center; height: 16px; border-top: 1px solid #666; background: linear-gradient(#e4e4e4, #c4c4c4 50%, #b0b0b0); color: #555; padding: 0 3px 0 5px; }
  span { border-right: 1px solid #a5a5a5; padding-right: 6px; white-space: nowrap; line-height: 14px; padding-top: 2px; }
  .page { width: 108px; }
  .words { width: 63px; text-align: right; }
  .lang { padding-left: 5px; }
  .proof { width: 24px; height: 15px; }
  .views { margin-left: auto; display: flex; }
  .views button { width: 15px; height: 15px; }
  .views .on { background: linear-gradient(#fbe79a, #f3cf63); border: 1px solid #b99a3e; }
  .zoom { margin: 0 5px 0 6px; width: 25px; }
  .dial { width: 13px; height: 15px; }
  input { appearance: none; width: 84px; height: 13px; margin: 0; background: linear-gradient(#999, #999) no-repeat center / 100% 1px; }
  input::-webkit-slider-thumb { appearance: none; width: 8px; height: 11px; background: #fafafa; border: 1px solid #555; border-radius: 1px 1px 4px 4px; }
`, `<span class="page">Page : 1 sur 1</span><span class="words">Mots : 2/192</span>
<button type="button" class="proof" aria-label="Vérification">${icon('proof')}</button><span class="lang">Français (France)</span>
<div class="views"><button type="button" class="on" aria-label="Page">${icon('viewPrint')}</button>${[['viewRead', 'Lecture plein écran'], ['viewWeb', 'Web'], ['viewPlan', 'Plan'], ['viewDraft', 'Brouillon']].map(([v, l]) => `<button type="button" aria-label="${l}">${icon(v)}</button>`).join('')}</div>
<button type="button" class="zoom">120 %</button>
<button type="button" class="dial" aria-label="Zoom arrière">${icon('minus')}</button><input type="range" aria-label="Zoom" value="51"><button type="button" class="dial" aria-label="Zoom avant">${icon('plus')}</button>`);

define('hint-tip', `
  :host { display: block; background: linear-gradient(#fff, #e6e6ea); border: 1px solid #8d8d8d; border-radius: 2px; box-shadow: 2px 2px 3px rgba(0,0,0,.35); color: #555; padding: 4px 3px 3px; }
  strong { display: block; color: #333; }
  p { margin: 6px 0 0; padding-left: 5px; white-space: nowrap; }
`, '<strong><slot name="title"></slot></strong><p><slot></slot></p>');

define('word-window', `
  :host { display: flex; flex-direction: column; height: 100vh; min-height: 360px; overflow: hidden; padding: 18px 0; background: #000; position: relative; }
  work-area { flex: 1; }
  hint-tip { position: absolute; left: 174px; top: 130px; width: 195px; height: 38px; }
  .pointer { position: absolute; left: 180px; top: 100px; }
  .mark { position: absolute; left: 5px; bottom: 20px; font: 700 12px/16px "Noto Sans", sans-serif; color: #fff;
    text-shadow: 1px 0 #000, -1px 0 #000, 0 1px #000, 0 -1px #000, 1px 1px #000, -1px 1px #000, 1px -1px #000, -1px -1px #000, 2px 0 #000, -2px 0 #000, 0 2px #000, 0 -2px #000; }
`, `<title-bar></title-bar><ribbon-tabs></ribbon-tabs><home-ribbon></home-ribbon><work-area></work-area><status-bar></status-bar>
<hint-tip><span slot="title">Gras (Ctrl+G)</span>Mettre le texte sélectionné en gras.</hint-tip>
<div class="pointer">${icon('pointer')}</div><div class="mark">Screencast-O-Matic.com</div>`);
</script>
</body>
</html>
